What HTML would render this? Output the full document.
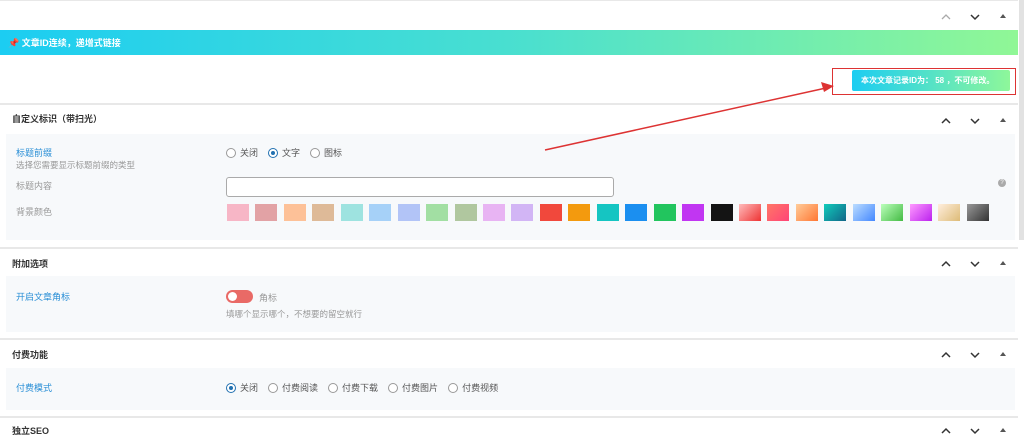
<!DOCTYPE html>
<html><head><meta charset="utf-8"><style>
*{margin:0;padding:0;box-sizing:border-box}
body{width:1024px;height:434px;overflow:hidden;background:#fff;font-family:"Liberation Sans","Noto Sans CJK SC",sans-serif;font-size:9px;color:#333;position:relative}
.a{position:absolute}
.hr{position:absolute;left:0;width:1018px;height:2px;background:#e8e8e8}
.box{position:absolute;left:6px;width:1009px;background:#f7f9fb}
.h{position:absolute;left:12px;font-size:9px;font-weight:bold;color:#333}
.lbl{position:absolute;left:16px;color:#2a8fd6}
.g{color:#999}
.r{display:inline-block;width:10px;height:10px;border:1px solid #999;border-radius:50%;vertical-align:-2px;margin-right:4px;background:#fff;position:relative}
.r.on{border-color:#2271b1}
.r.on:after{content:"";position:absolute;left:2px;top:2px;width:4px;height:4px;border-radius:50%;background:#2271b1}
.opt{margin-right:10px;color:#555}
.sw{position:absolute;top:204px;width:22px;height:17px}
</style></head><body>
<div class="hr" style="top:0;height:1px"></div>
<div class="a" style="left:1019px;top:0;width:5px;height:240px;background:#e2e2e2"></div>
<svg class="a" style="left:940px;top:10px" width="70" height="14"><path d="M2 9l4-4 4 4" stroke="#aaa" fill="none" stroke-width="1.3"/><path d="M31 5l4 4 4-4" stroke="#333" fill="none" stroke-width="1.5"/><path d="M60 8l3-4 3 4z" fill="#555"/></svg>
<div class="a" style="left:0;top:30px;width:1018px;height:25px;background:linear-gradient(90deg,#1ccdf2,#49dfd0 50%,#90f796)"></div>
<div class="a" style="left:8px;top:36px;color:#fff;font-weight:bold;font-size:9px">📌 文章ID连续，递增式链接</div>
<div class="a" style="left:852px;top:70px;width:158px;height:21px;border-radius:2px;background:linear-gradient(90deg,#1ccdf2,#8ef79a);color:#fff;font-size:8px;font-weight:bold;padding:5px 0 0 9px">本次文章记录ID为： 58 ，不可修改。</div>
<div class="a" style="left:832px;top:68px;width:184px;height:27px;border:1.5px solid #d33"></div>
<div class="hr" style="top:103px"></div>
<div class="h" style="top:112px">自定义标识（带扫光）</div>
<svg class="a" style="left:940px;top:114px" width="70" height="14"><path d="M2 9l4-4 4 4" stroke="#333" fill="none" stroke-width="1.5"/><path d="M31 5l4 4 4-4" stroke="#333" fill="none" stroke-width="1.5"/><path d="M60 8l3-4 3 4z" fill="#555"/></svg>
<div class="box" style="top:134px;height:106px"></div>
<div class="lbl" style="top:146px">标题前缀</div>
<div class="a g" style="left:16px;top:159px;font-size:8.5px">选择您需要显示标题前缀的类型</div>
<div class="a" style="left:226px;top:146px"><span class="r"></span><span class="opt">关闭</span><span class="r on"></span><span class="opt">文字</span><span class="r"></span><span class="opt">图标</span></div>
<div class="a g" style="left:16px;top:179px">标题内容</div>
<div class="a" style="left:226px;top:177px;width:388px;height:20px;border:1px solid #aaa;border-radius:3px;background:#fff"></div>
<div class="a" style="left:998px;top:179px;width:8px;height:8px;border-radius:50%;background:#aaa;color:#fff;font-size:6px;text-align:center;line-height:8px">?</div>
<div class="a g" style="left:16px;top:205px">背景颜色</div>
<div class="sw" style="left:227px;background:#f7b6c6"></div>
<div class="sw" style="left:255px;background:#e2a2a5"></div>
<div class="sw" style="left:284px;background:#fdc198"></div>
<div class="sw" style="left:312px;background:#deba98"></div>
<div class="sw" style="left:341px;background:#9ee3e0"></div>
<div class="sw" style="left:369px;background:#a6d1f8"></div>
<div class="sw" style="left:398px;background:#b2c4f7"></div>
<div class="sw" style="left:426px;background:#a2dfa3"></div>
<div class="sw" style="left:455px;background:#b0c79f"></div>
<div class="sw" style="left:483px;background:#e8b4f3"></div>
<div class="sw" style="left:511px;background:#d2b5f5"></div>
<div class="sw" style="left:540px;background:#f1483c"></div>
<div class="sw" style="left:568px;background:#f39a0e"></div>
<div class="sw" style="left:597px;background:#15c5c2"></div>
<div class="sw" style="left:625px;background:#1b8ff0"></div>
<div class="sw" style="left:654px;background:#22c55e"></div>
<div class="sw" style="left:682px;background:#c136f2"></div>
<div class="sw" style="left:711px;background:#141414"></div>
<div class="sw" style="left:739px;background:linear-gradient(135deg,#fbb,#e33)"></div>
<div class="sw" style="left:767px;background:linear-gradient(135deg,#f76,#f47)"></div>
<div class="sw" style="left:796px;background:linear-gradient(135deg,#fc9,#f73)"></div>
<div class="sw" style="left:824px;background:linear-gradient(135deg,#1cb,#168)"></div>
<div class="sw" style="left:853px;background:linear-gradient(135deg,#bdf,#48f)"></div>
<div class="sw" style="left:881px;background:linear-gradient(135deg,#bfb,#4b4)"></div>
<div class="sw" style="left:910px;background:linear-gradient(135deg,#f9f,#b2e)"></div>
<div class="sw" style="left:938px;background:linear-gradient(135deg,#fed,#db7)"></div>
<div class="sw" style="left:967px;background:linear-gradient(135deg,#999,#333)"></div>
<div class="hr" style="top:247px"></div>
<div class="h" style="top:257px">附加选项</div>
<svg class="a" style="left:940px;top:257px" width="70" height="14"><path d="M2 9l4-4 4 4" stroke="#333" fill="none" stroke-width="1.5"/><path d="M31 5l4 4 4-4" stroke="#333" fill="none" stroke-width="1.5"/><path d="M60 8l3-4 3 4z" fill="#555"/></svg>
<div class="box" style="top:276px;height:56px"></div>
<div class="lbl" style="top:290px">开启文章角标</div>
<div class="a" style="left:226px;top:290px;width:27px;height:13px;border-radius:7px;background:#e96a66"><div style="position:absolute;left:2px;top:2px;width:9px;height:9px;border-radius:50%;background:#fff"></div></div>
<div class="a g" style="left:259px;top:291px">角标</div>
<div class="a g" style="left:226px;top:308px;font-size:8.5px">填哪个显示哪个，不想要的留空就行</div>
<div class="hr" style="top:338px"></div>
<div class="h" style="top:348px">付费功能</div>
<svg class="a" style="left:940px;top:348px" width="70" height="14"><path d="M2 9l4-4 4 4" stroke="#333" fill="none" stroke-width="1.5"/><path d="M31 5l4 4 4-4" stroke="#333" fill="none" stroke-width="1.5"/><path d="M60 8l3-4 3 4z" fill="#555"/></svg>
<div class="box" style="top:368px;height:42px"></div>
<div class="lbl" style="top:381px">付费模式</div>
<div class="a" style="left:226px;top:381px"><span class="r on"></span><span class="opt">关闭</span><span class="r"></span><span class="opt">付费阅读</span><span class="r"></span><span class="opt">付费下载</span><span class="r"></span><span class="opt">付费图片</span><span class="r"></span><span class="opt">付费视频</span></div>
<div class="hr" style="top:416px"></div>
<div class="h" style="top:424px">独立SEO</div>
<svg class="a" style="left:940px;top:424px" width="70" height="14"><path d="M2 9l4-4 4 4" stroke="#333" fill="none" stroke-width="1.5"/><path d="M31 5l4 4 4-4" stroke="#333" fill="none" stroke-width="1.5"/><path d="M60 8l3-4 3 4z" fill="#555"/></svg>
<svg class="a" style="left:0;top:0" width="1024" height="434"><line x1="545" y1="150" x2="826" y2="88" stroke="#d33" stroke-width="1.5"/><path d="M834 86l-13-4 3 10z" fill="#d33"/></svg>
</body></html>
